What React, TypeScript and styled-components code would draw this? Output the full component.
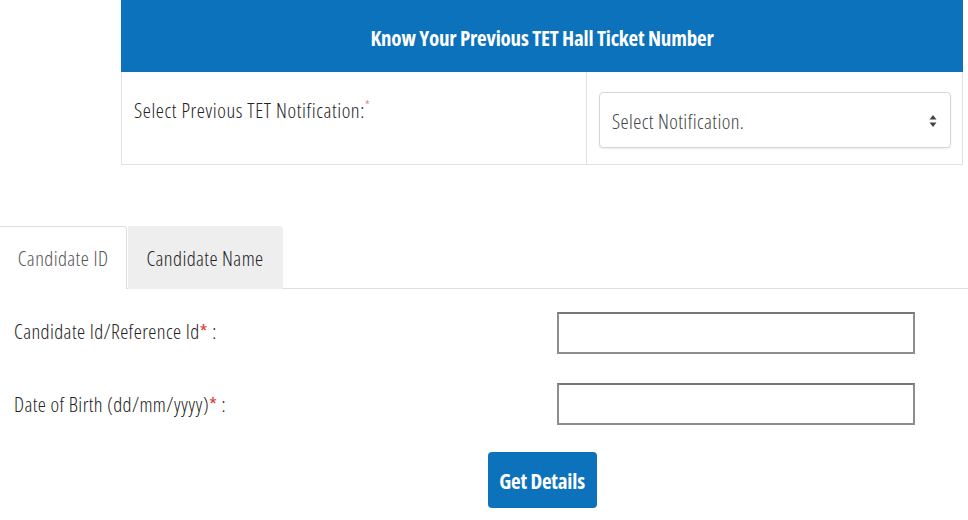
import React from 'react';
import styled, { createGlobalStyle } from 'styled-components';

const GlobalStyle = createGlobalStyle`
  body {
    margin: 0;
    background: #fff;
    font-family: "Open Sans", "Liberation Sans", sans-serif;
    font-stretch: 75%;
    font-weight: 300;
    letter-spacing: 0.4px;
    color: #222;
  }
`;

const Page = styled.div`
  width: 968px;
  height: 520px;
  overflow: hidden;
`;

const NotificationPanel = styled.div`
  margin-left: 121px;
  width: 842px;
`;

const PanelHeader = styled.div`
  height: 72px;
  background: #0b72bb;
  color: #fff;
  display: flex;
  align-items: center;
  justify-content: center;
  font-size: 21px;
  font-weight: 700;
  letter-spacing: -0.2px;
  padding-top: 3px;
  box-sizing: border-box;
`;

const PanelBody = styled.div`
  display: grid;
  grid-template-columns: 464px 1fr;
  height: 93px;
  border: 1px solid #e2e2e2;
  border-top: none;
  box-sizing: border-box;
`;

const PanelCell = styled.div<{ $divider?: boolean }>`
  padding: ${p => (p.$divider ? '20px 11px 0 12px' : '24px 12px 0 12px')};
  border-left: ${p => (p.$divider ? '1px solid #e2e2e2' : 'none')};
  font-size: 20.5px;
  letter-spacing: ${p => (p.$divider ? '0.4px' : '0.6px')};
`;

const Required = styled.span<{ $soft?: boolean }>`
  color: ${p => (p.$soft ? '#c9606e' : '#d43f3a')};
  font-size: ${p => (p.$soft ? '14px' : 'inherit')};
  font-weight: ${p => (p.$soft ? 300 : 400)};
  vertical-align: ${p => (p.$soft ? 'top' : 'baseline')};
`;

const SelectBox = styled.div`
  height: 56px;
  border: 1px solid #d5d5d5;
  border-radius: 4px;
  box-shadow: 0 1px 2px rgba(0, 0, 0, 0.08);
  display: flex;
  align-items: center;
  justify-content: space-between;
  padding: 2px 13px 0 12px;
  box-sizing: border-box;
  color: #444;
  font-size: 20.5px;
`;

const Tabs = styled.div`
  margin-top: 61px;
  display: flex;
  border-bottom: 1px solid #ddd;
`;

const Tab = styled.div<{ $active?: boolean }>`
  height: 63px;
  box-sizing: border-box;
  display: flex;
  align-items: center;
  justify-content: center;
  font-size: 20.5px;
  background: ${p => (p.$active ? '#fff' : '#eee')};
  color: ${p => (p.$active ? '#555' : '#222')};
  border: ${p => (p.$active ? '1px solid #ddd' : '1px solid #eee')};
  border-left: none;
  border-bottom: none;
  border-radius: 0 4px 0 0;
  width: ${p => (p.$active ? '127px' : '155px')};
  margin-left: ${p => (p.$active ? '0' : '1px')};
  margin-bottom: -1px;
`;

const Form = styled.div`
  padding: 23px 0 0 14px;
  display: flex;
  flex-direction: column;
  gap: 29px;
`;

const FormRow = styled.div`
  display: grid;
  grid-template-columns: 543px 358px;
  align-items: center;
`;

const Label = styled.label<{ $lift?: number }>`
  font-size: 20.5px;
  color: #222;
  padding-bottom: ${p => p.$lift ?? 0}px;
`;

const TextInput = styled.input`
  height: 42px;
  box-sizing: border-box;
  border: 2px solid #8d8d8d;
  border-top-color: #777;
  outline: none;
`;

const ButtonRow = styled.div`
  margin: 27px 0 0 121px;
  width: 842px;
  display: flex;
  justify-content: center;
`;

const SubmitButton = styled.button`
  width: 109px;
  height: 56px;
  background: #0b72bb;
  color: #fff;
  border: none;
  border-radius: 4px;
  font-family: inherit;
  font-stretch: 75%;
  font-size: 21px;
  font-weight: 700;
  letter-spacing: -0.2px;
  padding-top: 3px;
`;

const Arrows = () => (
  <svg width="8" height="14" viewBox="0 0 8 14">
    <path d="M4 1 L7.5 5.5 H0.5 Z" fill="#444" />
    <path d="M4 13 L7.5 8.5 H0.5 Z" fill="#444" />
  </svg>
);

const App: React.FC = () => {
  return (
    <Page>
      <GlobalStyle />
      <NotificationPanel>
        <PanelHeader>Know Your Previous TET Hall Ticket Number</PanelHeader>
        <PanelBody>
          <PanelCell>
            Select Previous TET Notification:<Required $soft>*</Required>
          </PanelCell>
          <PanelCell $divider>
            <SelectBox>
              <span>Select Notification.</span>
              <Arrows />
            </SelectBox>
          </PanelCell>
        </PanelBody>
      </NotificationPanel>

      <Tabs>
        <Tab $active>Candidate ID</Tab>
        <Tab>Candidate Name</Tab>
      </Tabs>

      <Form>
        <FormRow>
          <Label $lift={5}>
            Candidate Id/Reference Id<Required>*</Required> :
          </Label>
          <TextInput type="text" />
        </FormRow>
        <FormRow>
          <Label>
            Date of Birth (dd/mm/yyyy)<Required>*</Required> :
          </Label>
          <TextInput type="text" />
        </FormRow>
      </Form>

      <ButtonRow>
        <SubmitButton>Get Details</SubmitButton>
      </ButtonRow>
    </Page>
  );
};

export default App;
